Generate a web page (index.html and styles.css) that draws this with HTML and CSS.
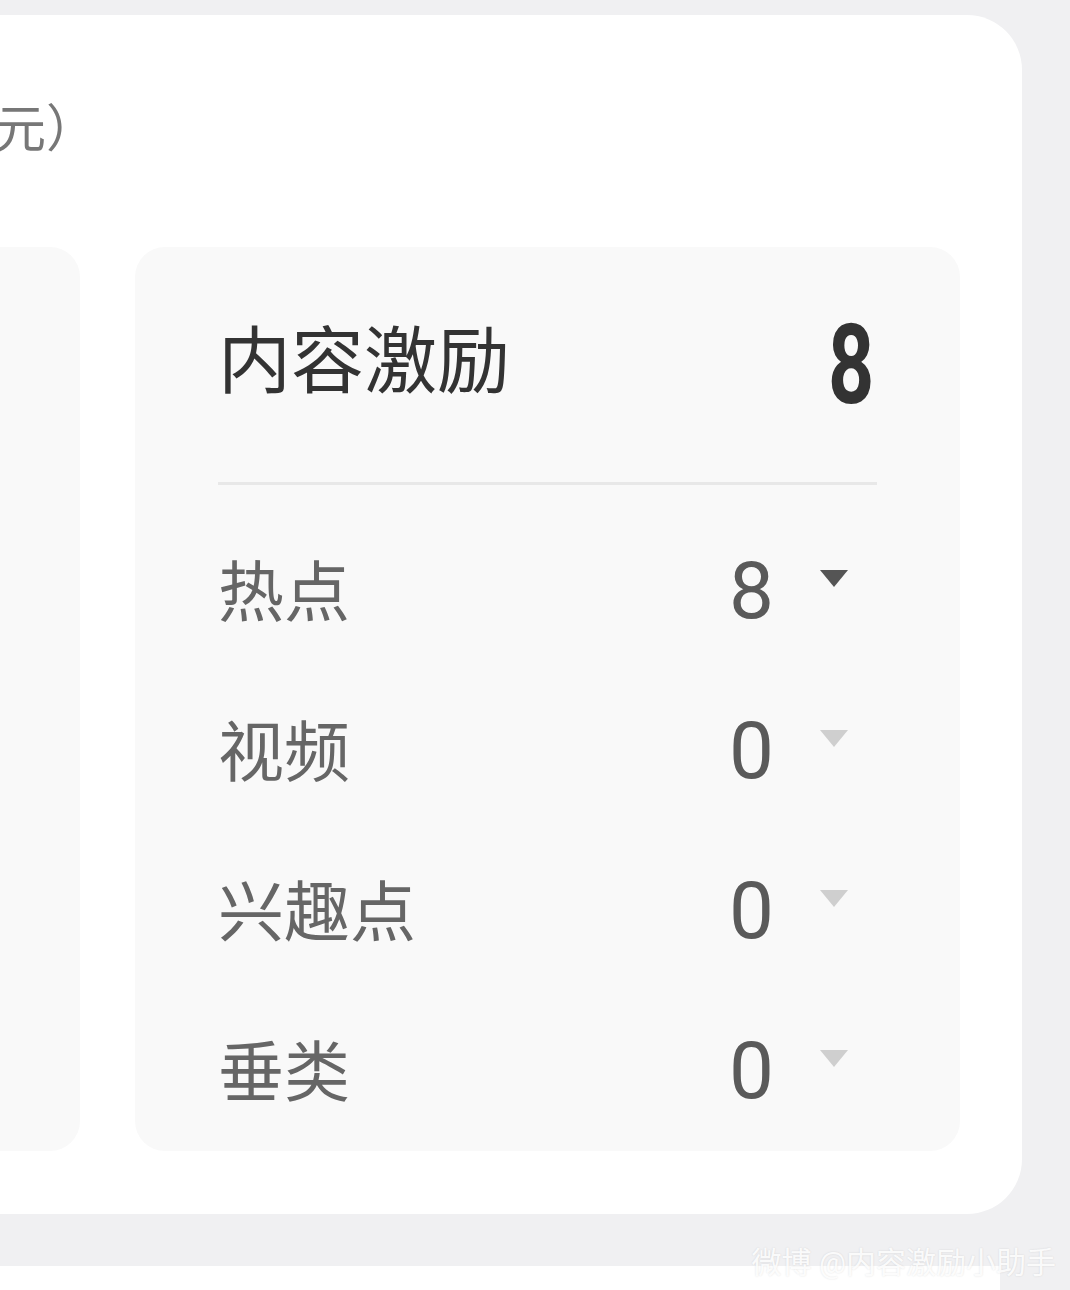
FILE: index.html
```html
<!DOCTYPE html>
<html lang="zh-CN">
<head>
    <meta charset="UTF-8">
    <meta name="viewport" content="width=device-width, initial-scale=1.0">
    <title>内容激励</title>
    <link rel="stylesheet" href="styles.css">
</head>
<body>
    <div class="page">
        <div class="card">
            <h2 class="card-title">预估收益（元）</h2>
            <div class="panels">
                <div class="panel panel-left"></div>
                <div class="panel">
                    <div class="panel-head">
                        <span class="panel-name">内容激励</span>
                        <span class="panel-total">8</span>
                    </div>
                    <div class="divider"></div>
                    <ul class="rows">
                        <li class="row">
                            <span class="row-name">热点</span>
                            <span class="row-value">8</span>
                            <svg class="tri active" width="28" height="17" viewBox="0 0 28 17"><polygon points="0,0 28,0 14,17"/></svg>
                        </li>
                        <li class="row">
                            <span class="row-name">视频</span>
                            <span class="row-value">0</span>
                            <svg class="tri" width="28" height="17" viewBox="0 0 28 17"><polygon points="0,0 28,0 14,17"/></svg>
                        </li>
                        <li class="row">
                            <span class="row-name">兴趣点</span>
                            <span class="row-value">0</span>
                            <svg class="tri" width="28" height="17" viewBox="0 0 28 17"><polygon points="0,0 28,0 14,17"/></svg>
                        </li>
                        <li class="row">
                            <span class="row-name">垂类</span>
                            <span class="row-value">0</span>
                            <svg class="tri" width="28" height="17" viewBox="0 0 28 17"><polygon points="0,0 28,0 14,17"/></svg>
                        </li>
                    </ul>
                </div>
            </div>
        </div>
        <div class="footer"></div>
        <span class="watermark">微博 @内容激励小助手</span>
    </div>
</body>
</html>
```

FILE: styles.css
```css
body {
    margin: 0;
    background-color: #f0f0f2;
    font-family: Roboto, "Noto Sans CJK SC", sans-serif;
    overflow: hidden;
}
.page {
    position: relative;
    padding-top: 15px;
    height: 1275px;
}
.card {
    margin-left: -322px;
    width: 1344px;
    box-sizing: border-box;
    background-color: #ffffff;
    border-radius: 55px;
    padding: 0 62px 63px 62px;
}
.card-title {
    margin: 0 0 87px 0;
    padding-top: 85px;
    font-size: 51px;
    line-height: 60px;
    font-weight: 400;
    color: #777;
}
.panels {
    display: grid;
    grid-template-columns: 1fr 825px;
    gap: 55px;
}
.panel {
    background-color: #f9f9f9;
    border-radius: 30px;
    padding: 0 83px;
}
.panel-left {
    padding: 0;
}
.panel-head {
    height: 235px;
    display: flex;
    justify-content: space-between;
    align-items: center;
}
.panel-name {
    font-size: 73px;
    color: #333;
    margin-bottom: 20px;
}
.panel-total {
    display: inline-block;
    font-family: Roboto, sans-serif;
    font-weight: 700;
    font-size: 112px;
    line-height: 1;
    color: #333;
    transform: scaleX(0.72);
    transform-origin: right center;
    margin-right: 3px;
}
.divider {
    height: 3px;
    background-color: #e8e8e8;
}
.rows {
    list-style: none;
    margin: 22px 0 0 0;
    padding: 0 0 4px 0;
}
.row {
    height: 160px;
    display: flex;
    align-items: center;
}
.row-name {
    flex: 1;
    font-size: 66px;
    color: #666;
}
.row-value {
    font-family: Roboto, sans-serif;
    font-size: 80px;
    color: #5a5a5a;
    margin-top: 8px;
}
.tri {
    margin-left: 46px;
    margin-right: 29px;
    margin-bottom: 18px;
    fill: #cfcfcf;
}
.tri.active {
    fill: #555;
}
.footer {
    margin-top: 52px;
    height: 30px;
    width: 1000px;
    background-color: #ffffff;
}
.watermark {
    position: absolute;
    right: 14px;
    bottom: 8px;
    font-size: 30px;
    color: rgba(255, 255, 255, 0.9);
    text-shadow: 0 0 2px rgba(0, 0, 0, 0.12);
}
```
